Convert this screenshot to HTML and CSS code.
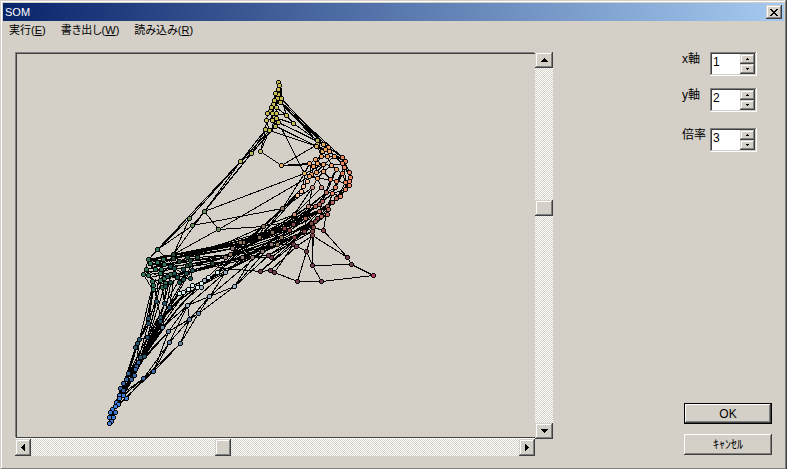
FILE: index.html
```html
<!DOCTYPE html>
<html lang="ja">
<head>
<meta charset="utf-8">
<title>SOM</title>
<link rel="stylesheet" href="styles.css">
</head>
<body>
<div class="window">
  <header class="titlebar">
    <h1 class="title">SOM</h1>
    <button class="close raised" type="button" aria-label="閉じる">
      <svg width="8" height="7" viewBox="0 0 8 7"><path d="M0 0h2v1h1v1h2V1h1V0h2v1H7v1H6v1H5v1h1v1h1v1h1v1H6V6H5V5H3v1H2v1H0V6h1V5h1V4h1V3H2V2H1V1H0z"/></svg>
    </button>
  </header>
  <nav class="menu">
    <button type="button">実行(<u>E</u>)</button>
    <button type="button">書き出し(<u>W</u>)</button>
    <button type="button">読み込み(<u>R</u>)</button>
  </nav>
  <main class="content">
    <section class="viewer">
      <div class="canvas">
        <svg id="map" class="map" width="518" height="383" viewBox="17 54 518 383" role="img"></svg>
      </div>
      <div class="scroll vertical">
        <button class="arrow raised" type="button" aria-label="上"><svg width="7" height="4" viewBox="0 0 7 4"><path d="M3 0h1v1h1v1h1v1h1v1H0V3h1V2h1V1h1z"/></svg></button>
        <input type="range" min="0" max="100" value="39" aria-label="縦位置">
        <button class="arrow raised" type="button" aria-label="下"><svg width="7" height="4" viewBox="0 0 7 4"><path d="M0 0h7v1H6v1H5v1H4v1H3V3H2V2H1V1H0z"/></svg></button>
      </div>
      <div class="scroll horizontal">
        <button class="arrow raised" type="button" aria-label="左"><svg width="4" height="7" viewBox="0 0 4 7"><path d="M4 0v7H3V6H2V5H1V4H0V3h1V2h1V1h1V0z"/></svg></button>
        <input type="range" min="0" max="100" value="39" aria-label="横位置">
        <button class="arrow raised" type="button" aria-label="右"><svg width="4" height="7" viewBox="0 0 4 7"><path d="M0 0h1v1h1v1h1v1h1v1H3v1H2v1H1v1H0z"/></svg></button>
      </div>
    </section>
    <aside class="side">
      <div class="fields">
        <div class="field">
          <label for="x-axis">x軸</label>
          <div class="spin"><input id="x-axis" type="text" value="1"><div class="steps"><button class="raised" type="button" aria-label="増やす"><svg width="3" height="2" viewBox="0 0 3 2"><path d="M1 0h1v1h1v1H0V1h1z"/></svg></button><button class="raised" type="button" aria-label="減らす"><svg width="3" height="2" viewBox="0 0 3 2"><path d="M0 0h3v1H2v1H1V1H0z"/></svg></button></div></div>
        </div>
        <div class="field">
          <label for="y-axis">y軸</label>
          <div class="spin"><input id="y-axis" type="text" value="2"><div class="steps"><button class="raised" type="button" aria-label="増やす"><svg width="3" height="2" viewBox="0 0 3 2"><path d="M1 0h1v1h1v1H0V1h1z"/></svg></button><button class="raised" type="button" aria-label="減らす"><svg width="3" height="2" viewBox="0 0 3 2"><path d="M0 0h3v1H2v1H1V1H0z"/></svg></button></div></div>
        </div>
        <div class="field scale">
          <label for="scale">倍率</label>
          <div class="spin"><input id="scale" type="text" value="3"><div class="steps"><button class="raised" type="button" aria-label="増やす"><svg width="3" height="2" viewBox="0 0 3 2"><path d="M1 0h1v1h1v1H0V1h1z"/></svg></button><button class="raised" type="button" aria-label="減らす"><svg width="3" height="2" viewBox="0 0 3 2"><path d="M0 0h3v1H2v1H1V1H0z"/></svg></button></div></div>
        </div>
      </div>
      <div class="actions">
        <button class="action default" type="button">OK</button>
        <button class="action" type="button">ｷｬﾝｾﾙ</button>
      </div>
    </aside>
  </main>
</div>
<script src="map.js"></script>
</body>
</html>
```

FILE: styles.css
```css
* { box-sizing: border-box; }

body {
  margin: 0;
  background: #d4d0c8;
  color: #000;
  font: 12px/14px "Liberation Sans", "Noto Sans CJK JP", sans-serif;
  font-feature-settings: "palt";
}

button, input { font: inherit; color: inherit; font-feature-settings: inherit; }

button {
  display: flex;
  align-items: center;
  justify-content: center;
  padding: 0;
  border: 0;
  border-radius: 0;
  background: #d4d0c8;
}

svg { display: block; flex: none; shape-rendering: crispEdges; }

.window {
  display: flex;
  flex-direction: column;
  min-height: 100vh;
  padding: 3px;
}

.window, .raised {
  box-shadow: inset -1px -1px #404040, inset 1px 1px #d4d0c8, inset -2px -2px #808080, inset 2px 2px #fff;
}

.titlebar {
  display: flex;
  align-items: center;
  justify-content: space-between;
  height: 18px;
  padding: 0 2px;
  background: linear-gradient(to right, #0a246a, #a6caf0);
}

.title { margin: 0; color: #fff; font-size: 11px; font-weight: 400; }
.close { width: 16px; height: 14px; }

.menu { display: flex; gap: 15px; padding: 2px 6px; font-size: 11px; }

.content {
  flex: 1;
  display: grid;
  grid-template-columns: 1fr 90px;
  gap: 129px;
  padding: 13px 12px 10px;
}

.viewer {
  display: grid;
  grid-template-columns: 1fr 18px;
  grid-template-rows: 1fr 18px;
}

.canvas {
  min-width: 0;
  margin: 1px 0 1px 1px;
  overflow: hidden;
  border: solid #404040;
  border-width: 1px 0 1px 1px;
  box-shadow: -1px -1px #808080, 0 1px #fff;
}

.scroll {
  display: flex;
  background: repeating-conic-gradient(#fff 0 25%, #d4d0c8 0 50%) 0 0 / 2px 2px;
}
.vertical { flex-direction: column; }
.horizontal { height: 17px; }
.arrow { flex: none; width: 16px; height: 16px; }
.vertical .arrow { width: 18px; }
.horizontal .arrow { height: 17px; }

.scroll input {
  flex: 1;
  min-width: 0;
  min-height: 0;
  margin: 0;
  appearance: none;
  background: none;
}
.vertical input { width: 18px; writing-mode: vertical-lr; }
.horizontal input { height: 17px; }

.scroll input::-webkit-slider-thumb {
  appearance: none;
  width: 16px;
  height: 17px;
  background: #d4d0c8;
  box-shadow: inset -1px -1px #404040, inset 1px 1px #d4d0c8, inset -2px -2px #808080, inset 2px 2px #fff;
}
.scroll.vertical input::-webkit-slider-thumb { width: 18px; height: 16px; }

.side { display: flex; flex-direction: column; justify-content: space-between; }
.fields { display: flex; flex-direction: column; gap: 12px; }
.field { display: grid; grid-template-columns: 28px 47px; }
.scale { margin-top: 4px; }

.spin {
  display: flex;
  height: 24px;
  padding: 2px;
  background: #fff;
  box-shadow: inset -1px -1px #fff, inset 1px 1px #808080, inset -2px -2px #d4d0c8, inset 2px 2px #404040;
}
.spin input {
  flex: 1;
  min-width: 0;
  height: 16px;
  padding: 0 1px;
  border: 0;
  background: none;
}
.steps { display: flex; flex-direction: column; width: 15px; }
.steps button { flex: 1; }

.actions { display: flex; flex-direction: column; gap: 10px; padding: 0 0 2px 2px; }
.action {
  height: 21px;
  box-shadow: inset -1px -1px #404040, inset 1px 1px #fff, inset -2px -2px #808080;
}
.default { border: 1px solid #000; }
```

FILE: map.js
```js
// Links between neighbouring map units, one polyline per entry.
const links = `
278,82 275,93 271,107 267,113 266,120 265,129 251,153 240,161 204,211 192,225 157,249 148,259
278,82 281,98 286,115 293,123 317,140 328,147 342,157
279,82 281,90 281,102 316,140
277,84 275,98 272,112 274,124
279,85 278,94 276,107 276,113 274,125 269,130 240,161 189,218 157,249
277,98 280,102 323,144 334,156 345,161
281,98 323,144 329,150 342,163
282,100 328,147
281,102 342,157
278,89 274,100 270,111 272,120 275,126 317,146 321,156
280,102 316,140 322,151 327,156
275,93 273,104 267,113 266,120 269,130 260,151 281,165 309,163
265,129 260,151
276,118 293,123 274,117 272,113
276,113 286,115 276,107
278,122 316,140 328,147
278,122 323,144 334,156
274,125 317,146 325,149 345,161
269,130 317,146
281,128 304,173
281,165 317,144
281,165 323,164 331,165
273,104 272,120 274,125 278,122
278,82 276,107 278,122
271,107 274,117 266,120
269,130 243,158 189,218 148,259
275,126 251,153 204,211 173,254
272,128 240,166 204,211
265,129 240,161 157,249
204,211 304,173 323,164
204,211 218,229 263,226 305,218
192,225 282,208 312,187
173,254 218,229 309,176
189,218 173,254
157,249 173,265
317,140 323,144 328,147 334,156 342,157 345,161 344,167 349,172 350,177 349,181 349,185 345,189 340,196 336,198 332,202 327,206 328,209 327,214 321,216 315,221
342,157 349,172
344,167 350,177 345,189
317,146 322,151 327,156 334,156 342,163 342,173 345,182 345,189 332,193 327,206
321,156 327,156 331,165 336,169 342,173 336,181 335,187 326,192 322,201 315,206
321,156 315,159 309,163 304,173 303,186 297,195 282,208 263,226 230,254
315,159 317,163 313,166 311,174 307,181 301,191 282,208
322,151 317,163 323,164 331,165 342,163
317,163 316,172 309,176 303,186 297,195 263,226
323,164 323,171 317,178 312,187 308,206 304,231
323,171 330,179 336,181 345,182
316,172 323,171 331,165
311,174 317,178 330,179
317,178 321,187 326,192 332,193 340,196
309,176 317,178 312,187 294,214
336,169 330,179 322,201 319,211
336,169 326,192 315,206
342,173 335,187 327,206 317,218 304,231
344,167 336,181 332,193 319,204 308,206
342,157 344,167 345,182 336,198 321,216
349,181 336,198 319,211
345,189 327,206 315,221
309,163 311,174 309,176
334,156 323,164 316,172
304,173 317,178
304,173 282,208
303,186 282,208 230,254
297,195 259,237 217,272
301,191 263,226 209,281
321,187 294,214 263,226
312,187 284,228 243,268
326,192 308,206 282,222 232,248
332,193 284,228 243,242
332,202 305,218 277,235 225,272
340,196 319,211 294,237 262,251 209,296
336,198 305,218 268,234
327,206 289,230 242,257 187,305
319,204 293,224 232,248
322,201 294,221 263,234 230,246
315,206 282,224 259,237
327,214 304,231 271,244 234,286 198,313
321,216 281,237 252,257 201,283
315,221 311,223 313,227 312,231 312,235
327,206 323,230 347,257 351,264 312,265 312,235
313,227 323,230
312,235 347,257
312,265 313,227
312,231 306,251 312,265 321,281 373,275 351,264
306,251 297,281 321,281
306,251 293,244 274,272 297,281
274,272 270,270 260,271 225,268 197,263
312,235 296,246 270,270
293,244 260,271
304,231 271,257 252,257 212,263
294,237 268,255 242,257 205,266
296,246 293,244 277,244
312,231 268,255 234,286
304,231 260,271
319,204 259,237 243,242 173,254
326,192 284,228 225,257 148,265
315,206 293,224 243,242 153,263
308,206 272,232 230,254 148,268
317,218 281,237 225,257 153,270
311,223 271,244 230,260 164,270
313,227 262,251 197,257 146,269
315,221 294,237 252,257 186,273
312,231 271,244 242,257 174,276
294,214 259,237 173,254
305,218 263,237 211,249 148,259
282,208 259,237 232,248 173,258
263,226 211,249 157,262
304,231 268,245 211,261 170,266
311,223 243,252 185,261 148,259
293,224 243,239 170,258
281,237 232,254 187,267
289,230 243,246 187,257
277,244 242,257 190,270
319,211 272,232 204,250 164,260
327,206 272,229 195,251 153,259
332,202 293,224 230,246 173,257
304,222 243,244 160,256
311,218 259,240 197,252
308,226 252,245 187,255
263,226 259,237
209,296 234,286 252,257
209,296 225,272 242,257
225,272 187,305 162,327 144,356
209,296 187,305 168,331 153,371 143,378 126,398
209,296 189,319 180,343 153,371 119,395
198,313 180,343 143,378 119,398
187,305 169,342 153,371
225,272 198,313 189,319 169,342 143,378 123,395
234,286 198,313 168,331 137,366
187,305 189,319
198,313 189,319 168,331 144,356
153,371 118,404
201,283 169,307 160,321 144,356 128,373 112,409 109,423
208,277 187,289 164,315 144,356 131,379 118,404
217,272 204,280 192,285 179,293 168,305 148,340 135,369
230,254 201,283 182,302 162,327 138,362 120,388
225,272 197,287 176,310 147,351 123,395
243,242 217,272 179,300 157,331 128,373
252,257 217,272 182,302 151,343 131,379
157,249 148,259 143,274 152,289 148,318 139,339 128,373 120,388 116,402 110,412 109,417
146,269 153,283 151,300 148,323 137,343 126,379 119,395 112,409
148,259 157,262 163,270 156,301 148,318 135,347 123,383
155,279 148,318 139,339 135,369 119,398
152,289 145,326 135,347 128,373 118,404
157,283 156,301 147,337 140,357 123,390
162,287 164,303 160,317 147,337 138,362 131,379 116,402
160,270 155,300 148,323 135,369
165,283 151,327 144,356 126,379
170,276 160,317 147,351 134,375 115,406
173,280 169,307 160,321 138,362 118,404
179,279 165,303 147,337 128,373
186,275 168,305 147,343 123,390
192,267 169,307 144,356 120,388
152,285 139,339 119,395
154,288 160,317 144,356 128,373
165,286 164,303 147,343 135,369
170,284 162,327 140,357 123,383
179,293 169,307 151,343 128,373
188,289 160,321 140,357 123,390
148,259 173,254 179,261 187,257 190,260 197,257 230,254
148,264 157,262 164,263 170,258 173,265 164,270 148,271 143,274
148,260 164,261 160,265 149,263 153,267 163,262
151,266 155,270 163,275 170,276 180,279 190,278 192,270 183,272 174,276 160,274
145,274 152,278 157,283 165,283 162,287 153,289 152,281 160,280 170,282 180,276 190,274
143,274 160,273 186,273 192,270
152,276 170,274 187,277
148,271 157,275 165,270 174,268 186,275 190,266
139,339 137,343 135,347 144,356 140,357 138,362 135,369 128,373 134,375 131,379 126,379 123,383 120,388 123,390 119,395 123,395 119,398 116,402 118,404 115,406 112,409 110,412 115,412 109,417 113,417 111,421 109,423
147,337 139,339
126,398 118,404
115,406 113,417
`;

// Map units, grouped by colour.
const units = {
  '#c8bc50': '278,82 279,85 278,89 278,94 275,93 277,98 281,98 280,102 274,100 273,104 271,107 276,107 270,111 267,113 272,113 276,113 274,117 266,120 272,120 276,118 286,115 293,123 274,125 278,122',
  '#b8b858': '265,129 269,130 275,126 260,151 251,153 240,161 317,140',
  '#e0b060': '281,165 317,144 316,146 323,144 322,151 304,173',
  '#f0a060': '328,147 325,149 329,151 321,156 327,156 334,156 315,159 309,163 317,163 323,164 331,165 313,166 336,169 316,172 323,171 311,174 309,176 317,178',
  '#ee8460': '342,157 345,161 342,163 344,167 342,173 349,172 350,177 349,181 345,182 349,185 345,189 336,181 330,179 335,187 332,193 340,196',
  '#ffc09a': '307,181 303,186 301,191 297,195',
  '#d09080': '312,187 321,187 308,206 294,214',
  '#b86858': '326,192 336,198 332,202 327,206 322,201 319,204 315,206 328,209 319,211 327,214 321,216 305,218',
  '#8c4848': '317,218 315,221 311,223 313,227 312,231 312,235 323,230 304,231 294,237 284,228 289,230 293,224',
  '#743c50': '293,244 296,246 306,251 312,265 297,281 321,281 347,257 351,264 274,272 270,270 260,271 271,257 268,255',
  '#b03c62': '373,275',
  '#93775f': '282,208 263,226 272,232 259,237 281,237 277,244 243,242 230,254 240,242',
  '#927c78': '271,244 262,251 252,257 242,257 232,248 225,257',
  '#668c58': '204,211 192,225 189,218 218,229',
  '#30785c': '157,249 148,259 150,263 146,269 143,274 148,275 157,262 163,259 164,264 155,269 161,269 164,278 170,274 160,273 152,281 160,280 153,285 165,283 162,287 153,289',
  '#284c38': '173,254 173,258 179,261 187,257 190,260 187,265 197,257 190,264 212,263',
  '#205450': '170,266 174,268 183,269 186,273 192,270 177,277 190,278 179,282 170,282 183,279 174,273 167,276 165,286',
  '#d4f0f4': '179,293 183,292 188,289 192,285 197,287 201,283 208,277 217,272',
  '#9cb4c8': '225,272 234,286 209,296 187,305 204,280 201,287',
  '#6688a8': '198,313 189,319 168,331 162,327 169,342 180,343',
  '#285870': '156,301 164,303 169,307 160,317 160,321 148,318 148,323 147,337 139,339 137,343 135,347 144,356 140,357',
  '#3468a8': '138,362 136,366 135,369 128,373 134,375 126,379 131,379 123,383 120,388 123,390 143,378 153,371',
  '#3c80dc': '119,395 123,395 119,398 116,402 118,404 115,406 112,409 110,412 115,412 109,417 113,417 111,421 109,423 126,398'
};

const SVG = 'http://www.w3.org/2000/svg';
const map = document.getElementById('map');

function add(name, attributes) {
  const node = document.createElementNS(SVG, name);
  for (const key in attributes) node.setAttribute(key, attributes[key]);
  map.append(node);
}

for (const points of links.trim().split('\n')) {
  add('polyline', { points, class: 'link', fill: 'none', stroke: '#000', transform: 'translate(.5 .5)' });
}

for (const fill in units) {
  for (const unit of units[fill].split(' ')) {
    const [x, y] = unit.split(',').map(Number);
    add('path', { d: `M${x - 1} ${y - 2}h3v1h1v3h-1v1h-3v-1h-1v-3h1z` });
    add('rect', { x: x - 1, y: y - 1, width: 3, height: 3, fill });
  }
}
```
